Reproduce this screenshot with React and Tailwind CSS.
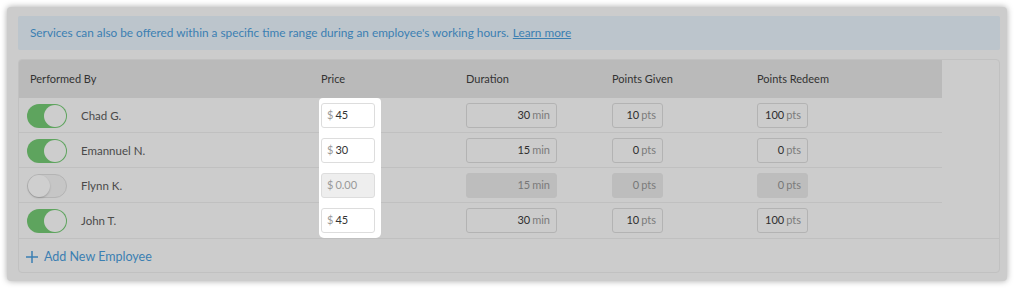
import React from "react";

const rows = [
  { name: "Chad G.", on: true, price: "45", dur: "30", given: "10", redeem: "100" },
  { name: "Emannuel N.", on: true, price: "30", dur: "15", given: "0", redeem: "0" },
  { name: "Flynn K.", on: false, price: "0.00", dur: "15", given: "0", redeem: "0" },
  { name: "John T.", on: true, price: "45", dur: "30", given: "10", redeem: "100" },
];

function Toggle({ on }) {
  if (on) {
    return (
      <div className="relative w-[40px] h-[24px] rounded-full bg-[#5ea45e] shrink-0">
        <div className="absolute right-[1px] top-[1px] w-[22px] h-[22px] rounded-full bg-[#cdcdcd]" />
      </div>
    );
  }
  return (
    <div className="relative w-[40px] h-[24px] rounded-full bg-[#c6c6c6] border border-[#b4b4b4] shrink-0">
      <div className="absolute left-[0px] top-[0px] w-[22px] h-[22px] rounded-full bg-[#cfcfcf] shadow-[0_1px_2px_rgba(0,0,0,0.2)]" />
    </div>
  );
}

function UnitBox({ value, unit, width, disabled }) {
  return (
    <div
      className={`${width} h-[25px] rounded-[3px] border flex items-center justify-end pr-[6px] ${
        disabled ? "bg-[#bdbdbd] border-[#bdbdbd] text-[#7a7a7a]" : "bg-[#cccccc] border-[#b3b3b3] text-[#333333]"
      }`}
    >
      <span className={disabled ? "text-[#777777]" : "text-[#2e2e2e]"}>{value}</span>
      <span className="ml-[2px] text-[#7b7b7b]">{unit}</span>
    </div>
  );
}

export default function App() {
  return (
    <div
      className="w-[1016px] h-[290px] bg-white pt-[7px] pl-[7px]"
      style={{ fontFamily: "Lato, 'Noto Sans', sans-serif" }}
    >
      <div className="w-[1000px] h-[274px] bg-[#cccccc] rounded-[4px] shadow-[0_0_6px_rgba(0,0,0,0.35)] pt-[9px] pl-[11px] pr-[7px] flex flex-col">
        <div className="h-[34px] bg-[#bcc5cc] rounded-[2px] flex items-center pl-[12px] text-[11.8px] text-[#3b7fb2]">
          Services can also be offered within a specific time range during an employee's working hours.
          <span className="ml-[4px] underline">Learn more</span>
        </div>
        <div className="mt-[9px] h-[214px] border border-[#c1c1c1] rounded-[4px] flex flex-col overflow-hidden">
          <div className="w-[923px]">
            <div className="h-[38px] bg-[#bababa] grid grid-cols-[300px_147px_146px_145px_185px] items-center text-[11px] text-[#333333]">
              <div className="pl-[11px]">Performed By</div>
              <div className="pl-[2px]">Price</div>
              <div>Duration</div>
              <div>Points Given</div>
              <div>Points Redeem</div>
            </div>
            {rows.map((r, i) => (
              <div
                key={r.name}
                className={`h-[35px] grid grid-cols-[300px_147px_146px_145px_185px] items-center text-[11px] ${
                  i < rows.length - 1 ? "border-b border-[#c0c0c0]" : ""
                }`}
              >
                <div className="flex items-center pl-[8px]">
                  <Toggle on={r.on} />
                  <span className="ml-[14px] text-[#4a4a4a] text-[11.5px]">{r.name}</span>
                </div>
                <div className="h-full flex items-center">
                  <div
                    className={`w-[62px] h-[35px] bg-white flex items-center pl-[2px] ${
                      i === 0 ? "rounded-t-[4px]" : ""
                    } ${i === rows.length - 1 ? "rounded-b-[5px]" : ""}`}
                  >
                    <div
                      className={`w-[54px] h-[25px] rounded-[3px] border border-[#dddddd] flex items-center pl-[5px] ${
                        r.on ? "bg-white text-[#333333]" : "bg-[#eeeeee] text-[#999999]"
                      }`}
                    >
                      <span className="text-[#999999] mr-[2px]">$</span>
                      <span>{r.price}</span>
                    </div>
                  </div>
                </div>
                <div>
                  <UnitBox value={r.dur} unit="min" width="w-[91px]" disabled={!r.on} />
                </div>
                <div>
                  <UnitBox value={r.given} unit="pts" width="w-[51px]" disabled={!r.on} />
                </div>
                <div>
                  <UnitBox value={r.redeem} unit="pts" width="w-[51px]" disabled={!r.on} />
                </div>
              </div>
            ))}
          </div>
          <div className="border-t border-[#c0c0c0] h-[35px] flex items-center pl-[7px] pt-[3px] text-[12.5px] text-[#3b7fb2]">
            <svg width="12" height="12" viewBox="0 0 12 12" className="mr-[6px]">
              <path d="M6 0v12M0 6h12" stroke="#3b7fb2" strokeWidth="1.5" />
            </svg>
            Add New Employee
          </div>
        </div>
      </div>
    </div>
  );
}
